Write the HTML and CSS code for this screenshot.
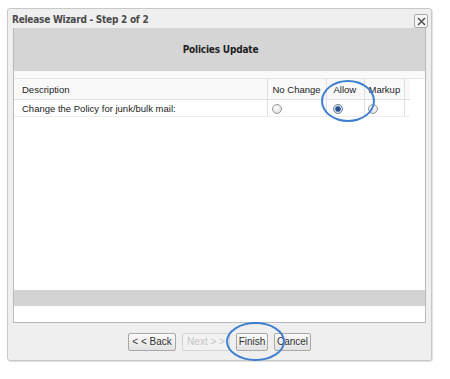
FILE: index.html
```html
<!DOCTYPE html>
<html>
<head>
<meta charset="utf-8">
<link rel="stylesheet" href="styles.css">
</head>
<body>
<div class="dialog">
  <div class="titlebar">
    <span class="title">Release Wizard - Step 2 of 2</span>
    <span class="close">
      <svg width="9" height="9" viewBox="0 0 9 9"><path d="M1 1L8 8M8 1L1 8" stroke="#555" stroke-width="1.6"/></svg>
    </span>
  </div>
  <div class="panel">
    <div class="panel-header">Policies Update</div>
    <div class="strip"></div>
    <table class="grid">
      <colgroup>
        <col class="w-desc"><col class="w-nc"><col class="w-allow"><col class="w-mark"><col class="w-end">
      </colgroup>
      <tr class="head">
        <td class="c-desc">Description</td>
        <td class="c-nc">No Change</td>
        <td class="c-allow">Allow</td>
        <td class="c-mark">Markup</td>
        <td class="c-end"></td>
      </tr>
      <tr class="row">
        <td class="c-desc">Change the Policy for junk/bulk mail:</td>
        <td class="c-nc"><span class="radio"></span></td>
        <td class="c-allow"><span class="radio on"></span></td>
        <td class="c-mark"><span class="radio"></span></td>
        <td class="c-end"></td>
      </tr>
    </table>
    <div class="fill"></div>
    <div class="band"></div>
    <div class="bottom"></div>
  </div>
  <div class="footer">
    <span class="btn b-back">&lt; &lt; Back</span>
    <span class="btn b-next disabled">Next &gt; &gt;</span>
    <span class="btn b-finish">Finish</span>
    <span class="btn b-cancel">Cancel</span>
  </div>
</div>
<div class="ring ring-allow"></div>
<div class="ring ring-finish"></div>
</body>
</html>
```

FILE: styles.css
```css
html, body {
  margin: 0;
  padding: 0;
  background: #ffffff;
}
body {
  width: 450px;
  height: 379px;
  position: relative;
  overflow: hidden;
  font-family: "Liberation Sans", Arial, sans-serif;
}
.dialog {
  margin: 8px 0 0 7px;
  width: 423px;
  height: 351px;
  border: 1px solid #c8c8c8;
  border-radius: 3px;
  background: #efefef;
  display: flex;
  flex-direction: column;
  box-shadow: 1px 1px 0 #e2e2e2;
}
.titlebar {
  height: 19px;
  display: flex;
  align-items: center;
  justify-content: space-between;
  padding: 0 3px 0 4px;
}
.title {
  font-family: "DejaVu Sans Condensed", "DejaVu Sans", Tahoma, sans-serif;
  font-weight: bold;
  font-size: 10px;
  color: #4a4a4a;
  letter-spacing: -0.25px;
  margin-top: 1px;
}
.close {
  width: 12px;
  height: 12px;
  border: 1px solid #aaa;
  border-radius: 2px;
  background: #f6f6f6;
  display: flex;
  align-items: center;
  justify-content: center;
  margin-top: 5px;
}
.panel {
  margin: 0 5px 0 5px;
  height: 294px;
  border: 1px solid #b9b9b9;
  border-top: none;
  background: #ffffff;
  display: flex;
  flex-direction: column;
}
.panel-header {
  height: 43px;
  background: #d5d5d5;
  display: flex;
  align-items: center;
  justify-content: center;
  font-family: "DejaVu Sans Condensed", "DejaVu Sans", Tahoma, sans-serif;
  font-weight: bold;
  font-size: 10px;
  color: #222;
  letter-spacing: -0.2px;
  padding-left: 2px;
}
.strip {
  height: 7px;
  border-bottom: 1px solid #e6e6e6;
  background: #fafafa;
}
.grid {
  border-collapse: collapse;
  table-layout: fixed;
  width: 396px;
  font-size: 9.5px;
  color: #222;
}
.w-desc { width: 253px; }
.w-nc { width: 59px; }
.w-allow { width: 38px; }
.w-mark { width: 40px; }
.w-end { width: 6px; }
.grid td {
  padding: 0 0 0 8px;
  border-right: 1px solid #e0e0e0;
  white-space: nowrap;
  overflow: hidden;
}
.head td {
  height: 20px;
  border-bottom: 1px solid #e0e0e0;
  background: #f9f9f9;
}
.row td {
  height: 16px;
  border-bottom: 1px solid #ececec;
}
.grid .c-nc { padding-left: 5px; }
.grid .c-allow { padding-left: 7px; }
.grid .c-mark { padding-left: 4px; }
.c-end { border-right: none !important; }
.radio {
  display: inline-block;
  width: 10px;
  height: 10px;
  border-radius: 50%;
  border: 1px solid #9a9a9a;
  background: radial-gradient(circle at 40% 35%, #ffffff, #d6d6d6);
  vertical-align: middle;
  box-sizing: border-box;
}
.row .c-nc .radio { margin-left: -1px; }
.row .c-allow .radio { margin-left: -1px; }
.row .c-mark .radio { margin-left: -1px; }
.radio.on {
  background: radial-gradient(circle, #1d3f73 0, #2d5aa0 2.3px, #dfe6ee 3.3px, #c9d0d8 100%);
  border-color: #6e7f94;
}
.fill {
  flex: 1;
}
.band {
  height: 16px;
  background: #d3d3d3;
}
.bottom {
  height: 16px;
}
.footer {
  flex: 1;
  display: flex;
  align-items: center;
  justify-content: center;
  gap: 6px;
  padding-top: 1px;
}
.btn {
  height: 16px;
  line-height: 16px;
  border: 1px solid #a8a8a8;
  border-radius: 2px;
  background: linear-gradient(#fafafa, #e2e2e2);
  font-family: "Liberation Sans", Tahoma, sans-serif;
  font-size: 10px;
  color: #333;
  text-align: center;
  box-sizing: border-box;
  height: 18px;
}
.b-back { width: 48px; }
.b-next { width: 48px; }
.b-finish { width: 32px; }
.b-cancel { width: 37px; }
.btn.disabled {
  color: #c4c4c4;
  border-color: #d4d4d4;
  background: #f2f2f2;
}
.ring {
  position: absolute;
  border: 2px solid #3f7fd0;
  border-radius: 50%;
}
.ring-allow {
  left: 321px;
  top: 80px;
  width: 50px;
  height: 38px;
}
.ring-finish {
  left: 226px;
  top: 322px;
  width: 55px;
  height: 35px;
}
```
